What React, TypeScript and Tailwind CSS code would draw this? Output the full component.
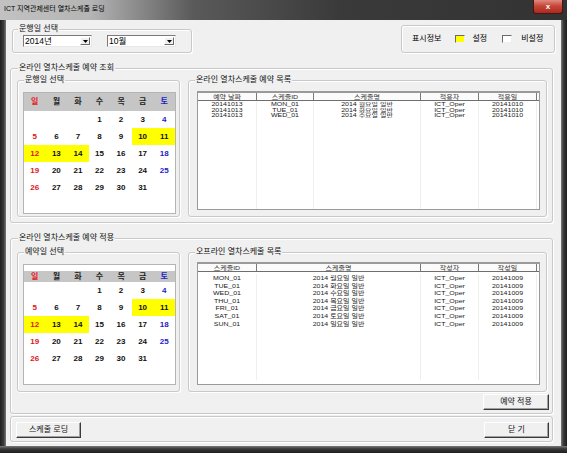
import React from "react";

const F = "font-['Liberation_Sans','Noto_Sans_CJK_KR',sans-serif]";

function Group({ cls, label, labelCls, children }: { cls: string; label?: string; labelCls?: string; children?: React.ReactNode }) {
  return (
    <div className={"relative border border-[#c9c9c9] rounded-[3px] shadow-[inset_1px_1px_0_#ffffff,1px_1px_0_#ffffff] " + cls}>
      {label ? (
        <span className={"absolute -top-[6px] bg-[#f0f0f0] px-[1px] text-[8px] leading-[10px] text-[#111] whitespace-nowrap " + (labelCls ?? "left-[5px]")}>
          {label}
        </span>
      ) : null}
      {children}
    </div>
  );
}

function Combo({ text, cls }: { text: string; cls: string }) {
  return (
    <div className={"h-[12px] w-[69px] bg-white border border-t-[#7a7a7a] border-l-[#7a7a7a] border-r-[#e8e8e8] border-b-[#e8e8e8] flex items-center " + cls}>
      <span className="ml-[1px] text-[8.5px] leading-[10px] text-black">{text}</span>
      <div className="ml-auto mr-[1px] w-[10px] h-[8px] bg-[#f0f0f0] border border-t-white border-l-white border-r-[#6a6a6a] border-b-[#6a6a6a] flex items-center justify-center">
        <svg width="5" height="3" viewBox="0 0 5 3"><path d="M0 0h5L2.5 3z" fill="#000" /></svg>
      </div>
    </div>
  );
}

function Btn({ text, cls }: { text: string; cls: string }) {
  return (
    <div className={"h-[16px] bg-[#f0f0f0] border border-t-white border-l-white border-r-[#3a3a3a] border-b-[#3a3a3a] shadow-[inset_-1px_-1px_0_#a0a0a0] flex items-center justify-center text-[8px] leading-[10px] text-[#111] " + cls}>
      {text}
    </div>
  );
}

const HEAD = ["일", "월", "화", "수", "목", "금", "토"];
const DAYS: (number | null)[][] = [
  [null, null, null, 1, 2, 3, 4],
  [5, 6, 7, 8, 9, 10, 11],
  [12, 13, 14, 15, 16, 17, 18],
  [19, 20, 21, 22, 23, 24, 25],
  [26, 27, 28, 29, 30, 31, null],
  [null, null, null, null, null, null, null],
];
const YELLOW = [10, 11, 12, 13, 14];

function Calendar({ wrapCls, headCls }: { wrapCls: string; headCls: string }) {
  return (
    <div className={"w-[153px] bg-white border border-[#b4b4b4] " + wrapCls}>
      <div className={"grid grid-cols-7 bg-[#c6c6c6] " + headCls}>
        {HEAD.map((h, i) => (
          <div
            key={h}
            className={
              "flex items-center justify-center text-[8px] font-bold " +
              (i === 0 ? "text-[#e8141e]" : i === 6 ? "text-[#1c1cc8]" : "text-[#222]")
            }
          >
            {h}
          </div>
        ))}
      </div>
      {DAYS.map((row, r) => (
        <div key={r} className="grid grid-cols-7 h-[17px]">
          {row.map((d, c) => {
            const y = d !== null && YELLOW.includes(d);
            let color = "text-[#111]";
            if (c === 0) color = "text-[#e0141e]";
            else if (c === 6 && !y) color = "text-[#1c1cc8]";
            return (
              <div
                key={c}
                className={"flex items-center justify-center text-[8px] font-bold " + color + (y ? " bg-[#ffff00]" : "")}
              >
                {d ?? ""}
              </div>
            );
          })}
        </div>
      ))}
    </div>
  );
}

type Col = { label: string; w: string };

function ListView({ cols, rows, boxCls, rowCls, bodyCls, textCls, fillers }: { cols: Col[]; rows: string[][]; boxCls: string; rowCls: string; bodyCls: string; textCls: string; fillers: number }) {
  return (
    <div className={"w-[343px] bg-white border border-[#9a9a9a] overflow-hidden " + boxCls}>
      <div className="flex h-[9px] border-b border-[#6e6e6e] bg-[#fbfbfb] border-t border-t-[#9a9a9a]">
        {cols.map((c, i) => (
          <div key={i} className={"flex items-center justify-center border-r border-[#7a7a7a] text-[7px] leading-[8px] text-[#333] " + c.w}>
            <span className="inline-block scale-y-[0.85]">{c.label}</span>
          </div>
        ))}
      </div>
      <div className={"flex flex-col " + bodyCls}>
        {rows.map((r, ri) => (
          <div key={ri} className={"flex " + rowCls}>
            {r.map((t, ci) => (
              <div key={ci} className={"flex items-center justify-center border-r border-[#efefef] text-[7px] leading-[7px] text-[#1a1a1a] whitespace-nowrap " + cols[ci].w}>
                <span className={"inline-block " + textCls}>{t}</span>
              </div>
            ))}
          </div>
        ))}
        {Array.from({ length: fillers }).map((_, fi) => (
          <div key={"f" + fi} className={"flex " + rowCls}>
            {cols.map((c, ci) => (
              <div key={ci} className={"border-r border-[#efefef] " + c.w} />
            ))}
          </div>
        ))}
      </div>
    </div>
  );
}

const ONLINE_COLS: Col[] = [
  { label: "예약 날짜", w: "w-[59px]" },
  { label: "스케줄ID", w: "w-[57px]" },
  { label: "스케줄명", w: "w-[107px]" },
  { label: "적용자", w: "w-[58px]" },
  { label: "적용일", w: "w-[58px]" },
];
const ONLINE_ROWS = [
  ["20141013", "MON_01", "2014 월요일 일반", "ICT_Oper", "20141010"],
  ["20141013", "TUE_01", "2014 화요일 일반", "ICT_Oper", "20141010"],
  ["20141013", "WED_01", "2014 수요일 일반", "ICT_Oper", "20141010"],
];
const OFF_COLS: Col[] = [
  { label: "스케줄ID", w: "w-[59px]" },
  { label: "스케줄명", w: "w-[164px]" },
  { label: "작성자", w: "w-[58px]" },
  { label: "작성일", w: "w-[58px]" },
];
const OFF_ROWS = [
  ["MON_01", "2014 월요일 일반", "ICT_Oper", "20141009"],
  ["TUE_01", "2014 화요일 일반", "ICT_Oper", "20141009"],
  ["WED_01", "2014 수요일 일반", "ICT_Oper", "20141009"],
  ["THU_01", "2014 목요일 일반", "ICT_Oper", "20141009"],
  ["FRI_01", "2014 금요일 일반", "ICT_Oper", "20141009"],
  ["SAT_01", "2014 토요일 일반", "ICT_Oper", "20141009"],
  ["SUN_01", "2014 일요일 일반", "ICT_Oper", "20141009"],
];

export default function App() {
  return (
    <div className={"w-[567px] h-[453px] overflow-hidden bg-[#2b2b2b] flex flex-col " + F}>
      {/* title bar */}
      <div className="h-[20px] flex items-start bg-[linear-gradient(to_right,#c2c2c2_0%,#b4b4b4_16%,#5a5a5a_34%,#3a3a3a_60%,#333333_100%)]">
        <span className="ml-[4px] mt-[4px] text-[7px] leading-[9px] text-black whitespace-nowrap">ICT 지역관제센터 열차스케줄 로딩</span>
        <div className="ml-auto mr-[4px] w-[30px] h-[14px] rounded-b-[3px] border border-[#4a1410] border-t-0 bg-[linear-gradient(#e08a80,#c8473a_45%,#a82a1e)] flex items-center justify-center">
          <span className="text-white text-[8px] font-bold leading-[8px]">x</span>
        </div>
      </div>
      <div className="flex flex-1">
        <div className="w-[6px] bg-[linear-gradient(to_right,#1e1e1e,#3a3a3a_60%,#7a7a7a)]" />
        {/* client */}
        <div className="w-[555px] h-[426px] bg-[#f0f0f0] flex flex-col text-black">
          {/* top row */}
          <div className="h-[48px] flex items-start">
            <Group cls="mt-[9px] ml-[6px] w-[180px] h-[24px] flex" label="운행일 선택">
              <Combo text="2014년" cls="mt-[5px] ml-[10px]" />
              <Combo text="10월" cls="mt-[5px] ml-[15px]" />
            </Group>
            <Group cls="mt-[5px] ml-auto mr-[6px] w-[154px] h-[28px] flex items-center">
              <span className="ml-[10px] text-[8px] leading-[10px]">표시정보</span>
              <div className="ml-[14px] w-[10px] h-[8px] bg-[#ffff00] border border-t-[#6a6a6a] border-l-[#6a6a6a] border-r-[#f0f0f0] border-b-[#f0f0f0]" />
              <span className="ml-[7px] text-[8px] leading-[10px]">설정</span>
              <div className="ml-[15px] w-[10px] h-[8px] bg-white border border-t-[#6a6a6a] border-l-[#6a6a6a] border-r-[#f0f0f0] border-b-[#f0f0f0]" />
              <span className="ml-[9px] text-[8px] leading-[10px]">비설정</span>
            </Group>
          </div>

          {/* section 1 */}
          <Group cls="ml-[4px] w-[543px] h-[155px] flex items-start" label="온라인 열차스케줄 예약 조회" labelCls="left-[7px]">
            <Group cls="mt-[11px] ml-[6px] w-[163px] h-[137px] flex items-start" label="운행일 선택" labelCls="left-[6px]">
              <Calendar wrapCls="mt-[11px] ml-[5px]" headCls="h-[18px]" />
            </Group>
            <Group cls="mt-[11px] ml-[8px] w-[359px] h-[137px] flex items-start" label="온라인 열차스케줄 예약 목록" labelCls="left-[6px]">
              <ListView cols={ONLINE_COLS} rows={ONLINE_ROWS} boxCls="mt-[10px] ml-[8px] h-[119px]" rowCls="h-[5.5px]" bodyCls="pt-[1px]" textCls="scale-y-[0.72]" fillers={18} />
            </Group>
          </Group>

          {/* section 2 */}
          <Group cls="mt-[15px] ml-[4px] w-[543px] h-[176px] flex flex-col" label="온라인 열차스케줄 예약 적용" labelCls="left-[7px]">
            <div className="flex items-start">
              <Group cls="mt-[13px] ml-[6px] w-[163px] h-[140px] flex items-start" label="예약일 선택" labelCls="left-[6px]">
                <Calendar wrapCls="mt-[11px] ml-[5px] pt-[6px]" headCls="h-[11px]" />
              </Group>
              <Group cls="mt-[13px] ml-[8px] w-[359px] h-[140px] flex items-start" label="오프라인 열차스케줄 목록" labelCls="left-[6px]">
                <ListView cols={OFF_COLS} rows={OFF_ROWS} boxCls="mt-[9px] ml-[8px] h-[123px]" rowCls="h-[7.55px]" bodyCls="pt-[2px]" textCls="scale-y-[0.85]" fillers={7} />
              </Group>
            </div>
            <div className="flex justify-end">
              <Btn text="예약 적용" cls="mt-[2px] mr-[3px] w-[66px]" />
            </div>
          </Group>

          {/* bottom */}
          <Group cls="mt-[2px] ml-[4px] w-[543px] h-[26px] flex items-start">
            <Btn text="스케줄 로딩" cls="mt-[5px] ml-[5px] w-[65px]" />
            <Btn text="닫 기" cls="mt-[5px] ml-auto mr-[3px] w-[65px]" />
          </Group>
        </div>
        <div className="w-[6px] bg-[linear-gradient(to_left,#1e1e1e,#3a3a3a_60%,#7a7a7a)]" />
      </div>
      <div className="h-[7px] bg-[linear-gradient(to_top,#1e1e1e,#3a3a3a_60%,#7a7a7a)]" />
    </div>
  );
}
